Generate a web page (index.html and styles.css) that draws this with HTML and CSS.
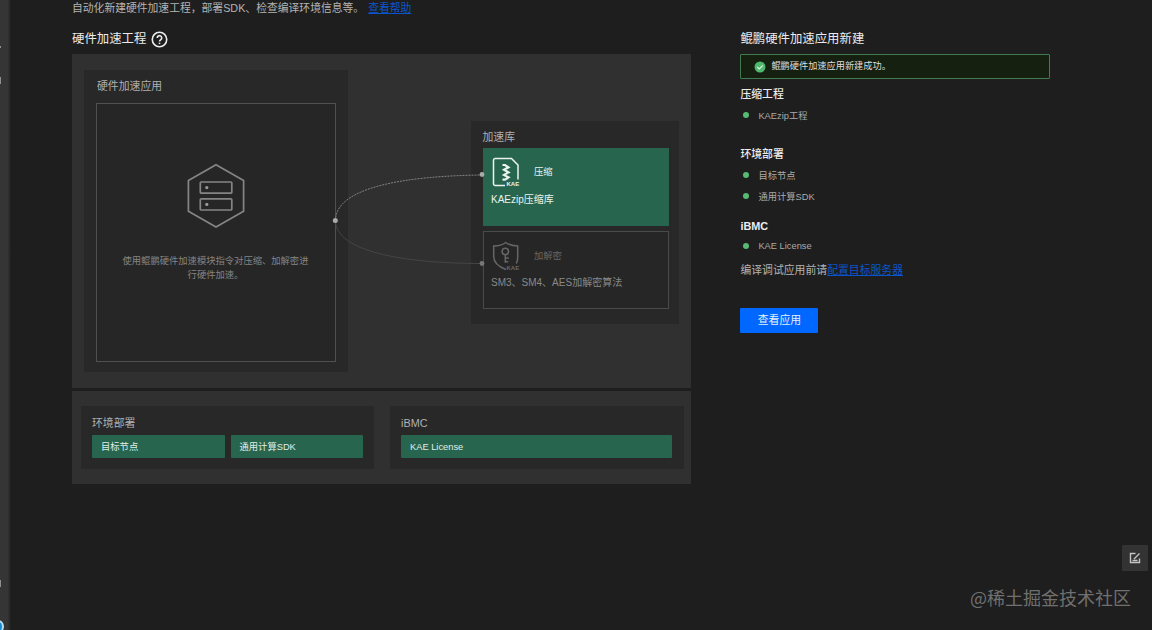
FILE: index.html
```html
<!DOCTYPE html>
<html lang="zh-CN">
<head>
<meta charset="utf-8">
<title>硬件加速工程</title>
<link rel="stylesheet" href="styles.css">
</head>
<body>
<div class="app">
  <aside class="rail">
    <span class="rail-mark rail-mark-a"></span>
    <span class="rail-mark rail-mark-b"></span>
    <span class="rail-mark rail-mark-c"></span>
    <span class="rail-ring"></span>
  </aside>
  <main class="main">
    <section class="project">
      <p class="intro">自动化新建硬件加速工程，部署SDK、检查编译环境信息等。<a class="link intro-link">查看帮助</a></p>
      <h1 class="title">硬件加速工程
        <svg class="help" viewBox="0 0 16 16"><circle cx="8" cy="8" r="6.8"/><path d="M5.900 6.500a2.100 2.100 0 1 1 3.300 1.700C8.300 8.800 8 9 8 9.800"/><path d="M8 11v1.300"/></svg>
      </h1>
      <div class="diagram">
        <div class="group app-group">
          <h2 class="label">硬件加速应用</h2>
          <div class="app-card">
            <svg class="server" viewBox="0 0 60 66"><path d="M30 1.800 57.600 17.500v30.800L30 64 2.400 48.300V17.500z"/><rect x="14.300" y="19" width="31.500" height="11.200" rx="1"/><rect x="14.300" y="35.800" width="31.500" height="11.200" rx="1"/><circle class="dot" cx="20.800" cy="24.600" r="1.600"/><circle class="dot" cx="20.800" cy="41.400" r="1.600"/></svg>
            <p class="app-text">使用鲲鹏硬件加速模块指令对压缩、加解密进行硬件加速。</p>
          </div>
        </div>
        <div class="group lib-group">
          <h2 class="label">加速库</h2>
          <div class="lib active">
            <div class="lib-head">
              <svg class="kae" viewBox="0 0 28 32"><path d="M13 28.500H3.200A1.700 1.700 0 0 1 1.500 26.800V3.200A1.700 1.700 0 0 1 3.200 1.500H19.500L26 8V22.500"/><path class="zip" d="M10.500 8h2.500l3.500 2.300-4.500 2.500 4.500 2.600-4.500 2.500 4.500 2.500-3.500 2.200h-2.500"/><text x="14.500" y="29.200">KAE</text></svg>
              <span>压缩</span>
            </div>
            <p class="lib-name">KAEzip压缩库</p>
          </div>
          <div class="lib idle">
            <div class="lib-head">
              <svg class="kae" viewBox="0 0 28 32"><path d="M14 28.500C6 25.500 1.700 22 1.700 15.500V5c5 0 9-1 12-3.500C17 4 20.500 5 25.700 5v11.500c0 2.400-.5 4.300-1.500 6"/><circle cx="13.300" cy="10.500" r="3.200"/><path d="M13.300 13.700v8M13.300 17h3.500M13.300 20.700h3"/><text x="14.500" y="29.200">KAE</text></svg>
              <span>加解密</span>
            </div>
            <p class="lib-name">SM3、SM4、AES加解密算法</p>
          </div>
        </div>
        <svg class="wires" viewBox="0 0 619 334"><path class="wire-on" d="M263.500 166.500C263.500 134 330 122 410 121"/><path class="wire-off" d="M263.500 166.500C263.500 197 330 209.500 410 209.500"/><circle cx="263.300" cy="166.600" r="2.500"/><circle cx="410" cy="120.500" r="2.400"/><circle class="far" cx="410" cy="209.500" r="2.400"/></svg>
      </div>
      <div class="deploy">
        <div class="group env-group">
          <h2 class="label">环境部署</h2>
          <div class="chips"><span class="chip">目标节点</span><span class="chip">通用计算SDK</span></div>
        </div>
        <div class="group bmc-group">
          <h2 class="label">iBMC</h2>
          <div class="chips"><span class="chip">KAE License</span></div>
        </div>
      </div>
    </section>
    <section class="result">
      <h1 class="title">鲲鹏硬件加速应用新建</h1>
      <div class="alert">
        <svg class="check" viewBox="0 0 12 12"><circle cx="6" cy="6" r="5.500"/><path d="m3.300 6 2 2 3.500-3.700"/></svg>
        <span class="alert-text">鲲鹏硬件加速应用新建成功。</span>
      </div>
      <h3 class="step first">压缩工程</h3>
      <ul class="items"><li>KAEzip工程</li></ul>
      <h3 class="step second">环境部署</h3>
      <ul class="items"><li>目标节点</li><li>通用计算SDK</li></ul>
      <h3 class="step third">iBMC</h3>
      <ul class="items"><li>KAE License</li></ul>
      <p class="note">编译调试应用前请<a class="link">配置目标服务器</a></p>
      <button class="view">查看应用</button>
    </section>
  </main>
  <button class="feedback"><svg viewBox="0 0 12 12"><path d="M6.500 1.500H1.500v9h9V6.500"/><path d="M5 7 10.500 1.500M3.500 8.500h5"/></svg></button>
  <div class="watermark">@稀土掘金技术社区</div>
</div>
</body>
</html>
```
FILE: styles.css
```css
* { box-sizing: border-box; margin: 0; padding: 0; }
body {
  background: #1e1e1e;
  color: #b4b4b4;
  font-family: "Liberation Sans", "Noto Sans CJK SC", sans-serif;
  overflow: hidden;
}
.app { position: relative; display: flex; width: 1152px; height: 630px; overflow: hidden; }
.rail { position: relative; width: 11px; background: linear-gradient(90deg, #353535 70%, #1e1e1e); flex: none; overflow: hidden; }
.rail-mark { position: absolute; left: 0; width: 1px; background: #909090; }
.rail-mark-a { top: 46px; height: 2px; }
.rail-mark-b { top: 77px; height: 7px; }
.rail-mark-c { top: 580px; height: 7px; }
.rail-ring { position: absolute; left: -7px; top: 620px; width: 11px; height: 13px; border: 2px solid #b9dcf0; border-radius: 50%; background: #168bd2; }
.main { display: flex; gap: 49.400px; padding-left: 61px; align-items: flex-start; }

.project { width: 619px; }
.intro { height: 30px; line-height: 16px; font-size: 10.800px; white-space: nowrap; }
.link { color: #0b55cc; text-decoration: underline; }
.intro-link { margin-left: 4px; }
.title { display: flex; align-items: center; height: 18px; font-size: 12.400px; font-weight: 400; line-height: 18px; color: #ececec; }
.help { width: 17px; height: 17px; margin-left: 5px; fill: none; stroke: #ececec; stroke-width: 1.500; }
.label { font-size: 10.850px; font-weight: 400; line-height: 16px; color: #b0b0b0; }
.group { background: #282828; }

.diagram { position: relative; display: flex; justify-content: space-between; align-items: flex-start; height: 334px; margin-top: 6px; padding: 16px 12px 0; background: #303030; }
.app-group { width: 264px; height: 302px; padding: 8px 12px 0; }
.app-group .label { padding-left: 1px; }
.app-card { display: flex; flex-direction: column; align-items: center; width: 240px; height: 259px; margin-top: 9px; padding: 59px 1px 0 0; border: 1px solid #505050; background: #262626; }
.server { width: 60px; height: 66px; fill: none; stroke: #858585; stroke-width: 1.700; }
.server .dot { fill: #999; stroke: none; }
.app-text { width: 187px; margin-top: 26px; font-size: 9.300px; line-height: 13.500px; text-align: center; color: #858585; }

.lib-group { width: 208px; height: 203px; margin-top: 51px; padding: 8px 10.500px 0 11.500px; }
.lib-group .label { height: 19px; }
.lib { height: 78px; padding: 9px 8px 0; }
.lib.active { background: #28654f; color: #e8f4ee; }
.lib.idle { margin-top: 5px; border: 1px solid #484b49; background: #262626; color: #666; padding: 9px 7px 0; }
.lib-head { display: flex; align-items: flex-start; gap: 14px; font-size: 9.300px; line-height: 31px; height: 35px; }
.idle .lib-head { height: 34px; }
.kae { width: 28px; height: 32px; margin-left: 1.500px; fill: none; stroke: currentColor; stroke-width: 1.500; }
.kae .zip { stroke-width: 2.200; }
.kae text { fill: currentColor; stroke: none; font: bold 6px "Liberation Sans", sans-serif; }
.lib-name { font-size: 10px; line-height: 15px; padding-left: .5px; }
.idle .lib-name { color: #898989; }
.wires { position: absolute; left: 0; top: 0; width: 619px; height: 334px; fill: #aaa; }
.wires path { fill: none; stroke-width: 1; }
.wire-on { stroke: #838383; stroke-dasharray: 2 1; }
.wire-off { stroke: #454545; }
.wires .far { fill: #777; }

.deploy { display: flex; gap: 16px; height: 93px; margin-top: 3px; padding: 15px 7px 0 9px; background: #303030; }
.deploy .group { height: 63px; padding: 9px 11px 0; }
.env-group { width: 293px; }
.bmc-group { width: 294px; }
.deploy .bmc-group { padding-right: 12px; }
.chips { display: flex; gap: 6px; margin-top: 4px; }
.chip { flex: 1; height: 23px; padding-left: 9px; border-radius: 1px; background: #28654f; color: #e0eee8; font-size: 9.300px; line-height: 24px; }

.result { width: 310px; padding-top: 30px; }
.alert { display: flex; align-items: center; height: 25px; margin-top: 6px; padding-left: 13px; gap: 5px; border: 1px solid #3f7b4c; border-radius: 1px; background: #152011; color: #dedede; font-size: 9.200px; }
.alert-text { padding-bottom: 3px; }
.check { width: 12px; height: 12px; fill: #4fb86d; }
.check path { fill: none; stroke: #d7f3de; stroke-width: 1.200; }
.step { height: 16px; font-size: 10.850px; line-height: 16px; color: #ececec; font-weight: 500; }
.first { margin-top: 7px; }
.second { margin-top: 20.500px; }
.third { margin-top: 10.500px; font-weight: 700; }
.items { list-style: none; margin-top: 2px; padding-left: 3px; }
.items li { display: flex; align-items: center; gap: 9px; height: 21.500px; font-size: 9.300px; color: #aaa; }
.items li::before { content: ""; width: 6px; height: 6px; border-radius: 50%; background: #57ba73; }
.note { margin-top: 5px; font-size: 10.850px; line-height: 16px; }
.view { display: block; width: 78px; height: 25px; margin-top: 30px; padding-bottom: 2px; border: 0; border-radius: 1px; background: #0067ff; color: #e6f0ff; font: 10.850px/22px "Liberation Sans", "Noto Sans CJK SC", sans-serif; }

.feedback { position: absolute; left: 1122px; top: 545px; display: flex; align-items: center; justify-content: center; width: 26px; height: 26px; border: 0; border-radius: 1px; background: #333; }
.feedback svg { width: 12px; height: 12px; fill: none; stroke: #c4c4c4; stroke-width: 1.400; }
.watermark { position: absolute; left: 970px; top: 584px; font: 400 18px/26px "Noto Sans CJK SC", sans-serif; color: #707070; white-space: nowrap; }
```
